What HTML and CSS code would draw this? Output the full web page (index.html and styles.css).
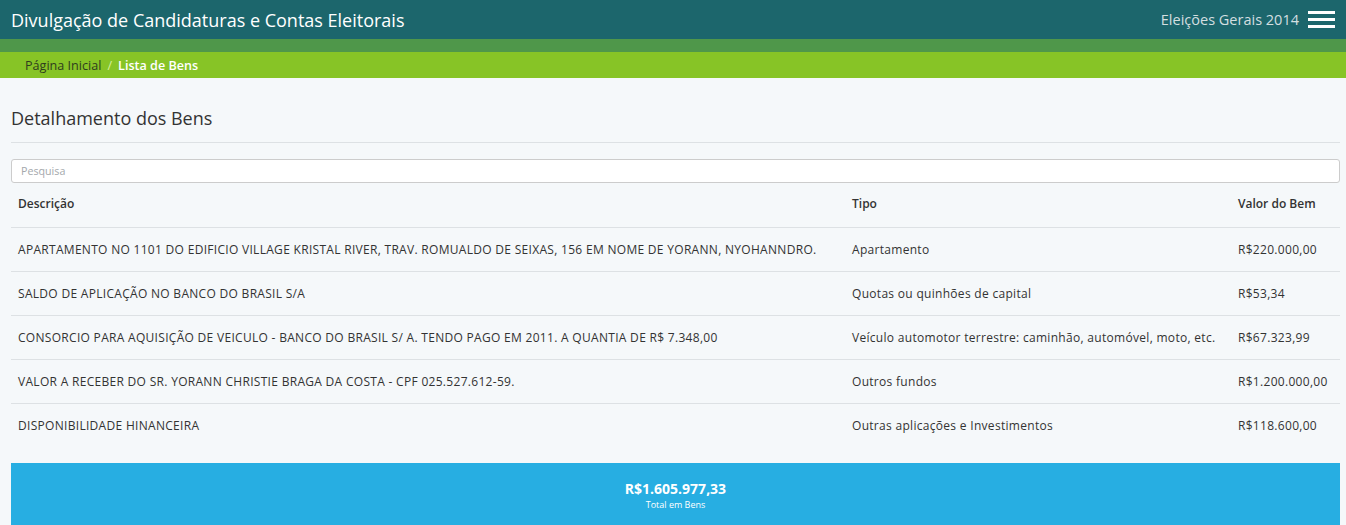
FILE: index.html
```html
<!DOCTYPE html>
<html lang="pt-BR">
<head>
<meta charset="utf-8">
<title>Lista de Bens</title>
<link rel="stylesheet" href="styles.css">
</head>
<body>
<header class="topbar">
  <div class="brand">Divulgação de Candidaturas e Contas Eleitorais</div>
  <div class="topbar-right">
    <span class="election">Eleições Gerais 2014</span>
    <span class="menu-icon" aria-label="menu"><i></i><i></i><i></i></span>
  </div>
</header>
<div class="stripe"></div>
<nav class="breadcrumb">
  <span class="crumb">Página Inicial</span>
  <span class="sep">/</span>
  <span class="crumb current">Lista de Bens</span>
</nav>
<main class="content">
  <h1 class="page-title">Detalhamento dos Bens</h1>
  <hr class="divider">
  <input class="search" type="text" placeholder="Pesquisa">
  <table class="assets">
    <thead>
      <tr><th class="col-desc">Descrição</th><th class="col-type">Tipo</th><th class="col-value">Valor do Bem</th></tr>
    </thead>
    <tbody>
      <tr><td>APARTAMENTO NO 1101 DO EDIFICIO VILLAGE KRISTAL RIVER, TRAV. ROMUALDO DE SEIXAS, 156 EM NOME DE YORANN, NYOHANNDRO.</td><td>Apartamento</td><td>R$220.000,00</td></tr>
      <tr><td>SALDO DE APLICAÇÃO NO BANCO DO BRASIL S/A</td><td>Quotas ou quinhões de capital</td><td>R$53,34</td></tr>
      <tr><td>CONSORCIO PARA AQUISIÇÃO DE VEICULO - BANCO DO BRASIL S/ A. TENDO PAGO EM 2011. A QUANTIA DE R$ 7.348,00</td><td>Veículo automotor terrestre: caminhão, automóvel, moto, etc.</td><td>R$67.323,99</td></tr>
      <tr><td>VALOR A RECEBER DO SR. YORANN CHRISTIE BRAGA DA COSTA - CPF 025.527.612-59.</td><td>Outros fundos</td><td>R$1.200.000,00</td></tr>
      <tr><td>DISPONIBILIDADE HINANCEIRA</td><td>Outras aplicações e Investimentos</td><td>R$118.600,00</td></tr>
    </tbody>
  </table>
  <section class="total">
    <div class="total-value">R$1.605.977,33</div>
    <div class="total-label">Total em Bens</div>
  </section>
</main>
</body>
</html>
```
FILE: styles.css
```css
* { box-sizing: border-box; }

html, body {
  margin: 0;
  padding: 0;
  background: #f5f8fa;
  font-family: "Open Sans", "DejaVu Sans", sans-serif;
  color: #333;
}

.topbar {
  height: 39px;
  background: #1c666c;
  display: flex;
  align-items: center;
  justify-content: space-between;
  padding: 0 11px 0 11px;
}

.brand {
  color: #fff;
  font-size: 18px;
}

.topbar-right {
  display: flex;
  align-items: center;
  gap: 9px;
}

.election {
  color: #d3dfe0;
  font-size: 14.5px;
}

.menu-icon {
  display: flex;
  flex-direction: column;
  gap: 4px;
  width: 27px;
}

.menu-icon i {
  display: block;
  height: 3px;
  background: #fff;
}

.stripe {
  height: 13px;
  background: #4f974a;
}

.breadcrumb {
  height: 26px;
  background: #87c426;
  display: flex;
  align-items: center;
  padding-left: 25px;
  font-size: 12.6px;
}

.crumb { color: #2f3d1e; }

.crumb.current {
  color: #fff;
  font-weight: 600;
}

.sep {
  color: #d6ef9a;
  margin: 0 6px;
}

.content {
  padding: 0 6px 0 11px;
}

.page-title {
  margin: 0;
  padding-top: 29px;
  font-size: 18px;
  font-weight: 400;
  line-height: 22px;
  color: #333;
}

.divider {
  margin: 13px 0 0;
  border: 0;
  border-top: 1px solid #dde1e4;
}

.search {
  display: block;
  width: 100%;
  height: 24px;
  margin-top: 16px;
  border: 1px solid #ccc;
  border-radius: 3px;
  background: #fff;
  padding: 0 9px;
  font-family: inherit;
  font-size: 10.7px;
  color: #333;
}

.search::placeholder { color: #a4a8ac; }

.assets {
  width: 100%;
  border-collapse: collapse;
  margin-top: 7px;
  font-size: 12px;
  letter-spacing: 0.3px;
}

.assets th {
  text-align: left;
  font-weight: 600;
  font-size: 12px;
  letter-spacing: 0;
  color: #333;
  height: 37px;
  padding: 0 7px 9px;
  border-bottom: 1px solid #dde1e4;
}

.assets td {
  height: 44px;
  padding: 0 7px;
  color: #333;
  border-bottom: 1px solid #dde1e4;
  white-space: nowrap;
}

.assets tbody tr:last-child td { border-bottom: 0; }

.col-desc { width: 834px; }
.col-type { width: 386px; }

.total {
  margin-top: 16px;
  height: 62px;
  background: #27aee2;
  color: #fff;
  display: flex;
  flex-direction: column;
  align-items: center;
  padding-top: 17px;
}

.total-value {
  font-size: 14px;
  font-weight: 700;
  line-height: 18px;
}

.total-label {
  font-size: 9px;
  line-height: 14px;
}
```
